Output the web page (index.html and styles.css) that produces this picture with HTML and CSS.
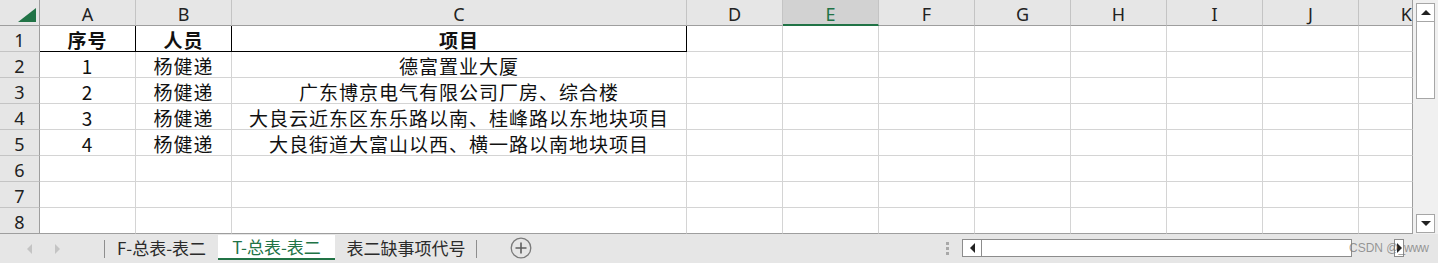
FILE: index.html
```html
<!DOCTYPE html>
<html>
<head>
  <meta charset="UTF-8">
  <title>Sheet</title>
  <link rel="stylesheet" href="styles.css">
</head>
<body>
  <div class="window">
    <div class="main">
      <div class="sheet">
        <div class="hd corner"><span class="corner-mark"></span></div>
        <div class="hd col">A</div>
        <div class="hd col">B</div>
        <div class="hd col">C</div>
        <div class="hd col">D</div>
        <div class="hd col selected">E</div>
        <div class="hd col">F</div>
        <div class="hd col">G</div>
        <div class="hd col">H</div>
        <div class="hd col">I</div>
        <div class="hd col">J</div>
        <div class="hd col k">K</div>

        <div class="hd row">1</div>
        <div class="cell bold boxed">序号</div>
        <div class="cell bold boxed">人员</div>
        <div class="cell bold boxed">项目</div>
        <div class="cell"></div><div class="cell"></div><div class="cell"></div><div class="cell"></div>
        <div class="cell"></div><div class="cell"></div><div class="cell"></div><div class="cell"></div>

        <div class="hd row">2</div>
        <div class="cell">1</div>
        <div class="cell">杨健递</div>
        <div class="cell">德富置业大厦</div>
        <div class="cell"></div><div class="cell"></div><div class="cell"></div><div class="cell"></div>
        <div class="cell"></div><div class="cell"></div><div class="cell"></div><div class="cell"></div>

        <div class="hd row">3</div>
        <div class="cell">2</div>
        <div class="cell">杨健递</div>
        <div class="cell">广东博京电气有限公司厂房、综合楼</div>
        <div class="cell"></div><div class="cell"></div><div class="cell"></div><div class="cell"></div>
        <div class="cell"></div><div class="cell"></div><div class="cell"></div><div class="cell"></div>

        <div class="hd row">4</div>
        <div class="cell">3</div>
        <div class="cell">杨健递</div>
        <div class="cell">大良云近东区东乐路以南、桂峰路以东地块项目</div>
        <div class="cell"></div><div class="cell"></div><div class="cell"></div><div class="cell"></div>
        <div class="cell"></div><div class="cell"></div><div class="cell"></div><div class="cell"></div>

        <div class="hd row">5</div>
        <div class="cell">4</div>
        <div class="cell">杨健递</div>
        <div class="cell">大良街道大富山以西、横一路以南地块项目</div>
        <div class="cell"></div><div class="cell"></div><div class="cell"></div><div class="cell"></div>
        <div class="cell"></div><div class="cell"></div><div class="cell"></div><div class="cell"></div>

        <div class="hd row">6</div>
        <div class="cell"></div><div class="cell"></div><div class="cell"></div><div class="cell"></div>
        <div class="cell"></div><div class="cell"></div><div class="cell"></div><div class="cell"></div>
        <div class="cell"></div><div class="cell"></div><div class="cell"></div>

        <div class="hd row">7</div>
        <div class="cell"></div><div class="cell"></div><div class="cell"></div><div class="cell"></div>
        <div class="cell"></div><div class="cell"></div><div class="cell"></div><div class="cell"></div>
        <div class="cell"></div><div class="cell"></div><div class="cell"></div>

        <div class="hd row">8</div>
        <div class="cell"></div><div class="cell"></div><div class="cell"></div><div class="cell"></div>
        <div class="cell"></div><div class="cell"></div><div class="cell"></div><div class="cell"></div>
        <div class="cell"></div><div class="cell"></div><div class="cell"></div>
      </div>

      <div class="vscroll">
        <div class="sbtn up"><span class="tri tri-up"></span></div>
        <div class="thumb"></div>
        <div class="vtrack"></div>
        <div class="sbtn down"><span class="tri tri-down"></span></div>
      </div>
    </div>

    <div class="tabbar">
      <div class="tabnav">
        <span class="tri tri-left dim"></span>
        <span class="tri tri-right dim"></span>
      </div>
      <div class="sep"></div>
      <div class="tab first">F-总表-表二</div>
      <div class="tab active">T-总表-表二</div>
      <div class="tab third">表二缺事项代号</div>
      <div class="sep"></div>
      <div class="add">
        <svg width="22" height="22" viewBox="0 0 22 22">
          <circle cx="11" cy="11" r="9.8" fill="none" stroke="#7a7a7a" stroke-width="1.3"/>
          <path d="M11 5.5v11M5.5 11h11" stroke="#5f5f5f" stroke-width="1.6"/>
        </svg>
      </div>
      <div class="grip">
        <span></span><span></span><span></span>
      </div>
      <div class="hscroll">
        <div class="hbtn left"><span class="tri tri-left"></span></div>
        <div class="htrack"></div>
      </div>
      <div class="hbtn right"><span class="tri tri-right"></span></div>
      <div class="watermark"><span class="wm-a">CSDN @_</span><span class="wm-b">www</span></div>
    </div>
  </div>
</body>
</html>
```

FILE: styles.css
```css
body {
  margin: 0;
  background-color: #e6e6e6;
  font-family: "Noto Sans CJK SC", "Noto Sans", sans-serif;
  overflow: hidden;
}

.window {
  width: 1438px;
  height: 263px;
  display: flex;
  flex-direction: column;
}

.main {
  display: flex;
  height: 234px;
}

.sheet {
  display: grid;
  grid-template-columns: 40px 96px 96px 455px repeat(7, 96px) 54px;
  grid-auto-rows: 26px;
  background-color: white;
}

.hd {
  box-sizing: border-box;
  background-color: #e6e6e6;
  color: #222;
  font-family: "Noto Sans", sans-serif;
  font-size: 18px;
  display: flex;
  align-items: center;
  justify-content: center;
  padding-top: 2px;
}

.hd.col {
  border-right: 1px solid #c4c4c4;
  border-bottom: 1px solid #9e9e9e;
}

.hd.col.k {
  justify-content: flex-end;
  border-right: 1px solid #9e9e9e;
}

.hd.col.selected {
  background-color: #d2d2d2;
  color: #217346;
  border-bottom: 2px solid #217346;
  padding-top: 3px;
}

.hd.row {
  border-right: 1px solid #9e9e9e;
  border-bottom: 1px solid #c4c4c4;
}

.hd.corner {
  border-right: 1px solid #9e9e9e;
  border-bottom: 1px solid #9e9e9e;
  position: relative;
}

.corner-mark {
  position: absolute;
  left: 18px;
  top: 8px;
  width: 0;
  height: 0;
  border-left: 18px solid transparent;
  border-bottom: 14px solid #217346;
}

.cell {
  box-sizing: border-box;
  border-right: 1px solid #d4d4d4;
  border-bottom: 1px solid #d4d4d4;
  font-size: 19px;
  letter-spacing: 1px;
  color: #111;
  display: flex;
  align-items: center;
  justify-content: center;
  white-space: nowrap;
  padding-top: 1px;
}

.cell.bold {
  font-weight: bold;
}

.cell.boxed {
  border-right: 1px solid #000;
  border-bottom: 1px solid #000;
  padding-top: 1px;
}

.sheet .cell:nth-child(12n) {
  border-right-color: #9e9e9e;
}

.sheet > :nth-last-child(-n+12) {
  border-bottom-color: #9e9e9e;
}

/* vertical scrollbar */
.vscroll {
  width: 25px;
  background-color: #f0f0f0;
  display: flex;
  flex-direction: column;
  align-items: flex-start;
  padding: 3px 0 0 3px;
  box-sizing: border-box;
}

.sbtn {
  box-sizing: border-box;
  width: 19px;
  height: 19px;
  background-color: white;
  border: 1px solid #a6a6a6;
  display: flex;
  align-items: center;
  justify-content: center;
}

.thumb {
  box-sizing: border-box;
  width: 19px;
  height: 77px;
  background-color: white;
  border: 1px solid #a6a6a6;
  border-top: none;
}

.vtrack {
  flex: 1;
}

.sbtn.down {
  margin-bottom: 1px;
}

.tri {
  display: inline-block;
  width: 0;
  height: 0;
}

.tri-up {
  border-left: 5px solid transparent;
  border-right: 5px solid transparent;
  border-bottom: 5px solid #222;
}

.tri-down {
  border-left: 5px solid transparent;
  border-right: 5px solid transparent;
  border-top: 5px solid #222;
}

.tri-left {
  border-top: 5px solid transparent;
  border-bottom: 5px solid transparent;
  border-right: 5px solid #222;
}

.tri-right {
  border-top: 5px solid transparent;
  border-bottom: 5px solid transparent;
  border-left: 5px solid #222;
}

.tri.dim.tri-left {
  border-right-color: #c4c4c4;
}

.tri.dim.tri-right {
  border-left-color: #c4c4c4;
}

/* sheet tabs */
.tabbar {
  height: 29px;
  display: flex;
  align-items: stretch;
  position: relative;
  font-size: 17px;
  color: #2b2b2b;
}

.tabnav {
  width: 104px;
  display: flex;
  align-items: center;
  gap: 23px;
  padding-left: 27px;
  box-sizing: border-box;
}

.sep {
  width: 1px;
  background-color: #8e8e8e;
  margin: 6px 0 5px;
}

.tab {
  display: flex;
  align-items: center;
  justify-content: center;
  box-sizing: border-box;
  padding-bottom: 3px;
  white-space: nowrap;
}

.tab.first {
  width: 113px;
  padding-left: 2px;
  padding-right: 2px;
}

.tab.active {
  width: 117px;
  background-color: white;
  color: #217346;
  border-bottom: 2px solid #217346;
  margin: 1px 0 3px;
  padding-bottom: 1px;
}

.tab.third {
  width: 141px;
  padding-left: 1px;
}

.add {
  width: 468px;
  padding-left: 33px;
  box-sizing: border-box;
  display: flex;
  align-items: center;
  padding-bottom: 1px;
}

.grip {
  width: 17px;
  display: flex;
  flex-direction: column;
  justify-content: center;
  gap: 2px;
  padding-left: 1px;
  box-sizing: border-box;
}

.grip span {
  width: 3px;
  height: 3px;
  background-color: #a8a8a8;
}

.hscroll {
  display: flex;
  margin: 5px 0 6px;
  width: 390px;
  box-sizing: border-box;
  border: 1px solid #8c8c8c;
  background-color: white;
}

.hbtn {
  display: flex;
  align-items: center;
  justify-content: center;
  box-sizing: border-box;
}

.hbtn.left {
  width: 19px;
  border-right: 1px solid #8c8c8c;
}

.htrack {
  flex: 1;
}

.hbtn.right {
  width: 10px;
  margin: 5px 0 6px 42px;
  border: 1px solid #8c8c8c;
  background-color: white;
  justify-content: flex-start;
  padding-left: 2px;
}

.watermark {
  position: absolute;
  left: 1349px;
  top: 5px;
  height: 18px;
  display: flex;
  align-items: center;
  white-space: nowrap;
  font-family: "Liberation Sans", sans-serif;
  font-size: 12px;
  color: rgba(120, 120, 120, 0.75);
}

.wm-a {
  width: 55px;
}

.wm-b {
  letter-spacing: -0.5px;
}
```
